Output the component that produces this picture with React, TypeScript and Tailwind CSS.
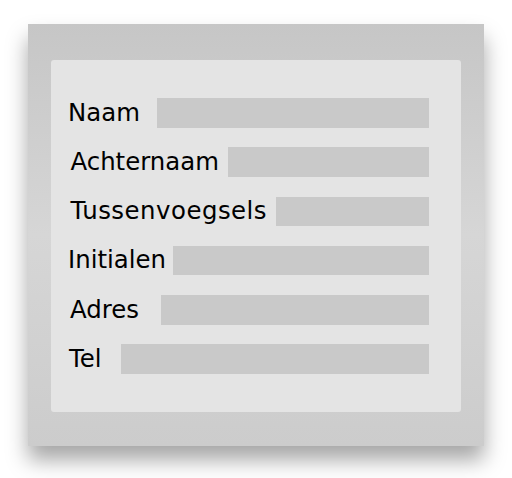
const fields = [
  { label: "Naam", labelClass: "ml-[17px]", barClass: "w-[272px]" },
  { label: "Achternaam", labelClass: "ml-[19.5px]", barClass: "w-[201px]" },
  { label: "Tussenvoegsels", labelClass: "ml-[19.5px] tracking-[0.5px]", barClass: "w-[153px]" },
  { label: "Initialen", labelClass: "ml-[17px]", barClass: "w-[256px]" },
  { label: "Adres", labelClass: "ml-[19px]", barClass: "w-[268px]" },
  { label: "Tel", labelClass: "ml-[18px]", barClass: "w-[308px]" },
];

export default function App() {
  return (
    <div className="w-[512px] h-[478px] bg-white pt-[24px] pl-[28px]">
      {/* buitenste paneel */}
      <div className="w-[456px] h-[422px] bg-gradient-to-b from-[#c6c6c6] via-[#d6d6d6] to-[#cccccc] shadow-[0_14px_20px_rgba(0,0,0,0.35)] pt-[36px] pl-[23px]">
        {/* formulier */}
        <form className="w-[410px] h-[352px] rounded-[3px] bg-[#e4e4e4] pt-[38px] pr-[32px] flex flex-col gap-[19.8px]">
          {fields.map((f) => (
            <div key={f.label} className="h-[29.5px] flex items-center justify-between">
              <label
                className={`${f.labelClass} text-[24.4px] leading-none text-black`}
                style={{ fontFamily: '"DejaVu Sans", sans-serif' }}
              >
                {f.label}
              </label>
              <div className={`${f.barClass} h-full bg-[#c9c9c9]`} />
            </div>
          ))}
        </form>
      </div>
    </div>
  );
}
